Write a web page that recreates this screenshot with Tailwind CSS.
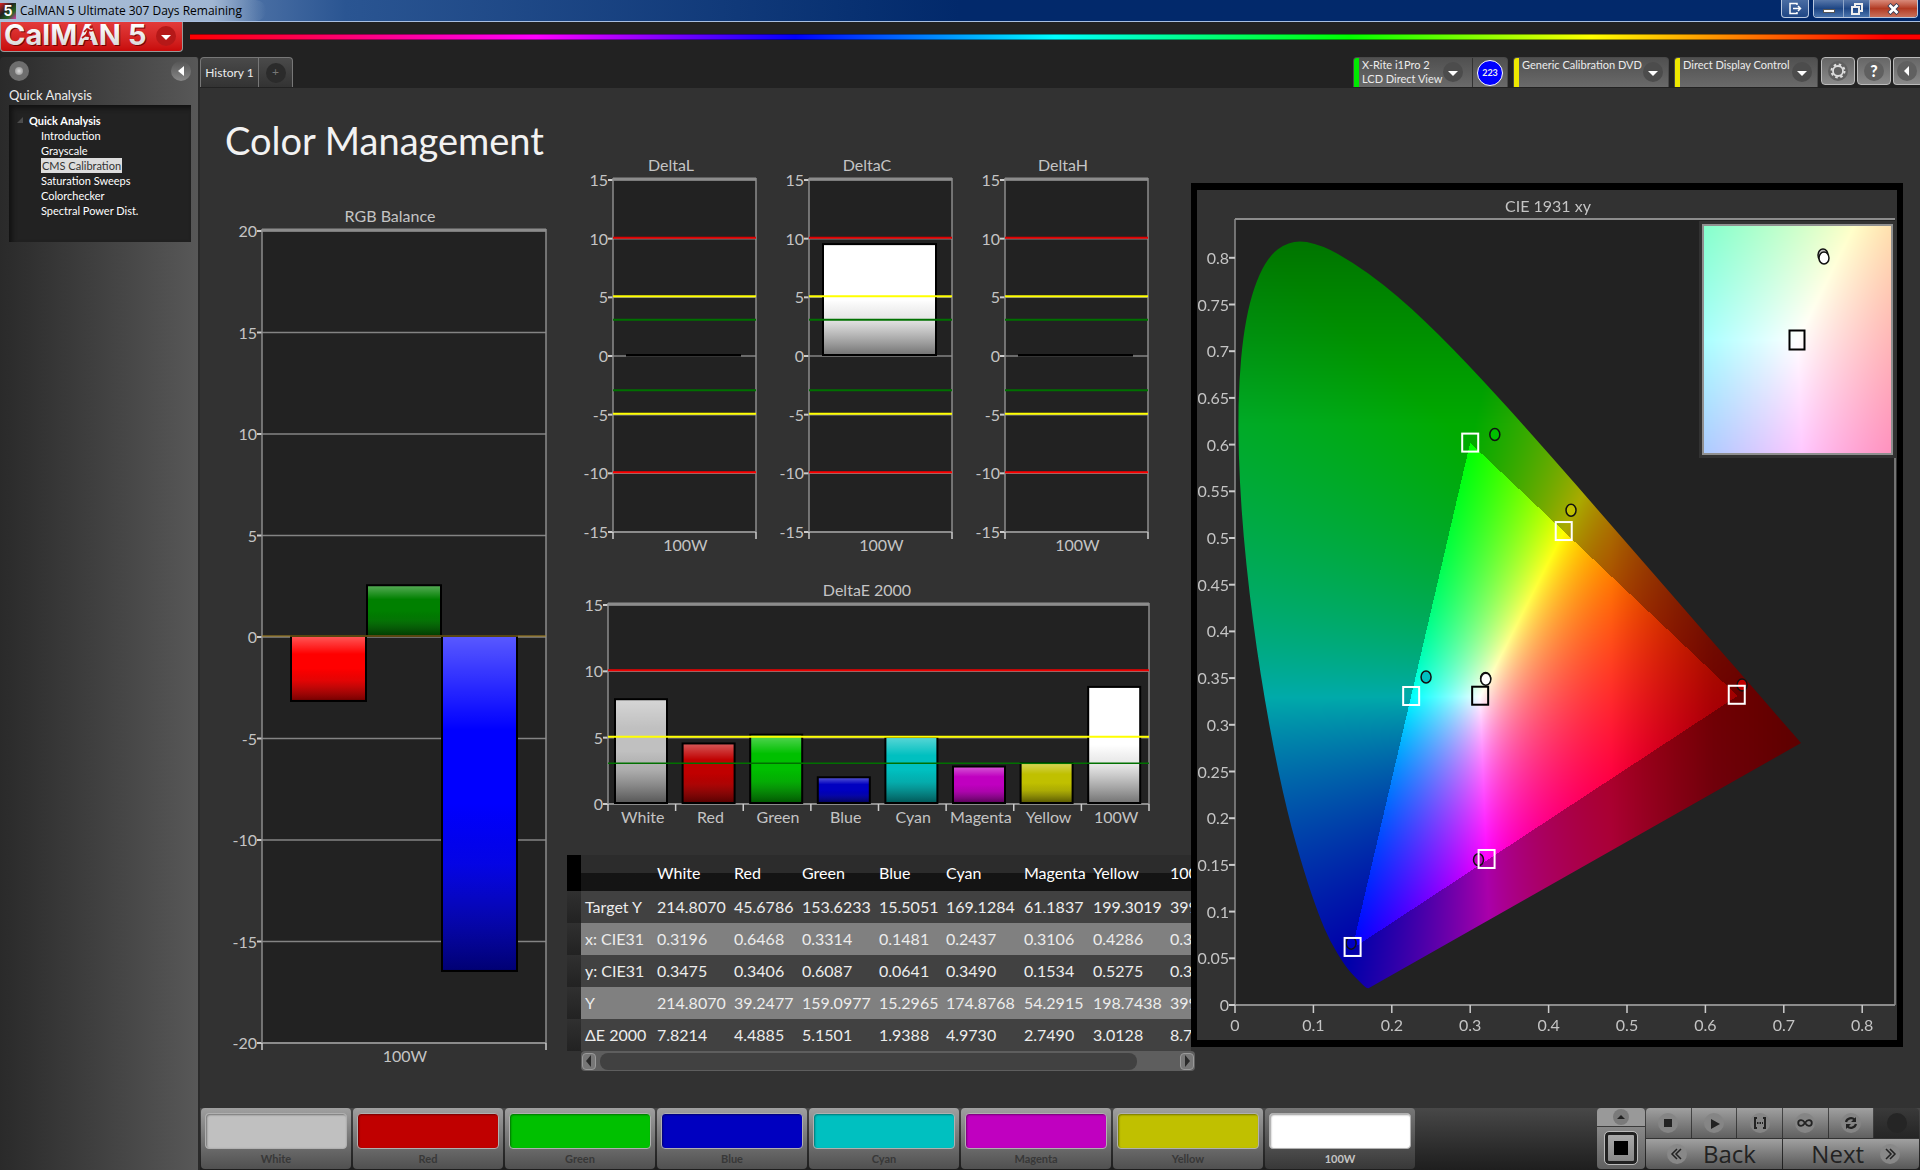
<!DOCTYPE html>
<html lang="en">
<head>
    <meta charset="UTF-8">
    <meta name="viewport" content="width=device-width, initial-scale=1.0">
    <title>CalMAN 5 Ultimate</title>
    <script src="https://cdn.jsdelivr.net/npm/@tailwindcss/browser@4"></script>
</head>
<body class="bg-[#222222] text-[#ececec] font-['Lato','Open_Sans',sans-serif] flex flex-col min-h-screen overflow-x-hidden">

    <!-- Window title bar -->
    <header class="h-[22px] flex items-start justify-between border-b border-[#a9bfe0] bg-linear-to-r from-[#a3b8d4] via-[#2a5592] via-18% to-[#02296b] to-50%">
        <div class="flex items-center h-[21px] pr-6 rounded-r-full bg-linear-to-r from-[#a9bdd6] via-[#a0b6d2] via-80% to-transparent">
            <svg class="w-4 h-4" viewBox="0 0 16 16">
                <defs><linearGradient id="appIcon" x1="0" y1="0" x2="1" y2="1"><stop offset="0" stop-color="#d22"/><stop offset=".4" stop-color="#222"/><stop offset=".7" stop-color="#262"/><stop offset="1" stop-color="#d3a"/></linearGradient></defs>
                <rect width="16" height="16" fill="url(#appIcon)"/>
                <text x="8" y="13" text-anchor="middle" font-family="Inter, sans-serif" font-size="14" font-weight="700" fill="#fff">5</text>
            </svg>
            <h1 class="pl-1 text-[12px] font-['Open_Sans',sans-serif] text-black whitespace-nowrap">CalMAN 5 Ultimate 307 Days Remaining</h1>
        </div>
        <div class="flex pr-[2px] gap-1">
            <button aria-label="Detach" class="w-[28px] h-[18px] rounded-b border border-t-0 border-[#b8c8e0] bg-linear-to-b from-[#4a6da3] to-[#1e4685] flex items-center justify-center">
                <svg class="w-[14px] h-[13px]" viewBox="0 0 14 13" fill="none" stroke="#fff" stroke-width="1.5"><path d="M9 3V1.5H2v10h7V10M5 6.500h7M10 4l2.500 2.500L10 9"/></svg>
            </button>
            <div class="flex h-[18px] rounded-b border border-t-0 border-[#b8c8e0] overflow-hidden">
                <button aria-label="Minimize" class="w-[30px] bg-linear-to-b from-[#5878aa] via-[#1e4685] to-[#4a74ad] flex items-center justify-center border-r border-[#8fa6c8]">
                    <span class="w-3 h-1 bg-white border border-[#555] mt-1"></span>
                </button>
                <button aria-label="Restore" class="w-[26px] bg-linear-to-b from-[#5878aa] via-[#1e4685] to-[#4a74ad] flex items-center justify-center border-r border-[#8fa6c8]">
                    <svg class="w-[12px] h-[12px]" viewBox="0 0 12 12" fill="none" stroke="#eee" stroke-width="2"><path d="M4 3V1h7v7H9"/><rect x="1" y="4" width="7" height="7"/></svg>
                </button>
                <button aria-label="Close" class="w-[47px] bg-linear-to-b from-[#d98a7a] via-[#b23a22] to-[#c9705a] flex items-center justify-center">
                    <svg class="w-[13px] h-[12px]" viewBox="0 0 13 12"><path d="M2 1.500L11 10.500M11 1.500L2 10.500" stroke="#333a55" stroke-width="4.500"/><path d="M2.500 2L10.500 10M10.500 2L2.500 10" stroke="#fff" stroke-width="2.800"/></svg>
                </button>
            </div>
        </div>
    </header>

    <!-- Logo and spectrum line -->
    <div class="flex h-[35px] items-start">
        <button aria-label="CalMAN menu" class="w-[183px] h-[30px] shrink-0 rounded-b border border-t-0 border-[#999] bg-linear-to-b from-[#e33a3a] to-[#c80808]">
            <svg class="w-full h-full" viewBox="0 0 181 29">
                <defs>
                    <linearGradient id="logoText" x1="0" y1="0" x2="0" y2="1"><stop offset=".2" stop-color="#fff"/><stop offset="1" stop-color="#cfcfcf"/></linearGradient>
                </defs>
                <g font-family="Inter, sans-serif" font-weight="700" font-size="29">
                    <g fill="#700"><text x="4" y="24">CalMAN</text><text x="128" y="24">5</text></g>
                    <g fill="url(#logoText)"><text x="3" y="23">CalMAN</text><text x="127" y="23">5</text></g>
                </g>
                <path d="M88 8l-3 5 4 2-1 4M85 13l-4 3M83 10l3-3 4 2 3-1" stroke="#b11" stroke-width="1.600" fill="none"/>
                <circle cx="90" cy="5" r="1.700" fill="#b11"/>
                <circle cx="165" cy="14" r="10" fill="#b51818"/>
                <path d="M160 13h10l-5 5z" fill="#fff"/>
            </svg>
        </button>
        <div class="flex-1 ml-[7px] mt-3 h-[6px] border-y border-black/40 bg-[linear-gradient(to_right,#f00,#f0f_20%,#00f_35%,#0ff_50%,#0f0_67%,#ff0_81%,#f00_98%)]"></div>
    </div>

    <div class="flex flex-1">
        <!-- Workflow sidebar -->
        <aside class="w-[200px] shrink-0 rounded-t bg-linear-to-r from-[#2a2a2a] to-[#585858] border-r-2 border-[#2a2a2a] pl-[9px] pr-[7px]">
            <div class="flex justify-between items-center pt-1">
                <button aria-label="Record" class="w-5 h-5 rounded-full bg-[#6e6e6e] flex items-center justify-center"><span class="w-2 h-2 rounded-full bg-radial from-[#ddd] to-[#888]"></span></button>
                <button aria-label="Collapse" class="w-5 h-5 rounded-full bg-linear-to-b from-[#555] to-[#888] flex items-center justify-center"><svg class="w-2 h-3" viewBox="0 0 8 12"><path d="M7 1v10L1 6z" fill="#fff"/></svg></button>
            </div>
            <h2 class="text-[13px] leading-5 mt-1">Quick Analysis</h2>
            <nav class="bg-[#222] shadow-[inset_3px_3px_5px_#111] h-[137px] pt-[7px] text-[11px] leading-[15px]">
                <div class="flex items-center font-bold text-white h-4">
                    <svg class="w-[6px] h-[6px] ml-2 mr-[6px]" viewBox="0 0 6 6"><path d="M6 0v6H0z" fill="#4c4c4c"/></svg>
                    Quick Analysis
                </div>
                <ul class="pl-8 text-white">
                    <li><a href="#">Introduction</a></li>
                    <li><a href="#">Grayscale</a></li>
                    <li class="flex"><a href="#" class="bg-[#dcdcdc] text-[#333] px-px">CMS Calibration</a></li>
                    <li><a href="#">Saturation Sweeps</a></li>
                    <li><a href="#">Colorchecker</a></li>
                    <li><a href="#">Spectral Power Dist.</a></li>
                </ul>
            </nav>
        </aside>

        <div class="flex-1 flex flex-col min-w-0">
            <!-- Tabs and devices -->
            <div class="flex justify-between items-start h-[31px]">
                <div class="flex h-[30px] rounded-t border border-b-0 border-[#777] bg-linear-to-b from-[#4a4a4a] to-[#333] text-[12px]">
                    <button class="w-[58px] border-r border-[#777] whitespace-nowrap">History 1</button>
                    <button aria-label="Add tab" class="w-[33px] flex items-center justify-center"><span class="w-[20px] h-[20px] rounded-full bg-[#2b2b2b] text-[#777] leading-[18px]">+</span></button>
                </div>
                <div class="flex items-start gap-[5px] text-[11px] leading-[14px]">
                    <div class="flex h-[30px] w-[155px] rounded-t border border-b-0 border-[#4a4a4a] bg-linear-to-b from-[#505050] to-[#6a6a6a] overflow-hidden">
                        <button class="flex flex-1 text-left">
                            <span class="w-[5px] h-full shrink-0 bg-[#00e800]"></span>
                            <span class="flex-1 pl-[3px] whitespace-nowrap">X-Rite i1Pro 2<br>LCD Direct View</span>
                            <svg class="w-[20px] h-[20px] mt-1 mr-[9px] shrink-0" viewBox="0 0 20 20"><circle cx="10" cy="10" r="10" fill="#4c4c4c"/><path d="M5 9h10l-5 5z" fill="#fff"/></svg>
                        </button>
                        <div class="border-l border-[#333] w-[35px] shrink-0 flex items-center justify-center"><span class="w-[26px] h-[26px] rounded-full bg-[#0000ff] border border-white text-[9px] leading-6 font-bold text-center">223</span></div>
                    </div>
                    <button class="flex h-[30px] w-[156px] rounded-t border border-b-0 border-[#4a4a4a] bg-linear-to-b from-[#505050] to-[#6a6a6a] overflow-hidden text-left">
                        <span class="w-[5px] h-full shrink-0 bg-[#eee800]"></span>
                        <span class="flex-1 pl-[3px] whitespace-nowrap">Generic Calibration DVD</span>
                        <svg class="w-[20px] h-[20px] mt-1 mr-[5px] shrink-0" viewBox="0 0 20 20"><circle cx="10" cy="10" r="10" fill="#4c4c4c"/><path d="M5 9h10l-5 5z" fill="#fff"/></svg>
                    </button>
                    <button class="flex h-[30px] w-[144px] rounded-t border border-b-0 border-[#4a4a4a] bg-linear-to-b from-[#505050] to-[#6a6a6a] overflow-hidden text-left">
                        <span class="w-[5px] h-full shrink-0 bg-[#eee800]"></span>
                        <span class="flex-1 pl-[3px] whitespace-nowrap">Direct Display Control</span>
                        <svg class="w-[20px] h-[20px] mt-1 mr-[5px] shrink-0" viewBox="0 0 20 20"><circle cx="10" cy="10" r="10" fill="#4c4c4c"/><path d="M5 9h10l-5 5z" fill="#fff"/></svg>
                    </button>
                    <div class="flex gap-[2px] ml-[-2px]">
                        <button aria-label="Settings" class="w-[34px] h-[28px] rounded border border-[#bbb] bg-linear-to-b from-[#666] to-[#8a8a8a] flex items-center justify-center">
                            <svg class="w-[20px] h-[20px]" viewBox="0 0 20 20"><circle cx="10" cy="10" r="10" fill="#606060"/><circle cx="10" cy="10" r="5" fill="none" stroke="#ddd" stroke-width="1.800"/><circle cx="10" cy="10" r="6.500" fill="none" stroke="#ddd" stroke-width="2" stroke-dasharray="2.500 2.600"/></svg>
                        </button>
                        <button aria-label="Help" class="w-[34px] h-[28px] rounded border border-[#bbb] bg-linear-to-b from-[#666] to-[#8a8a8a] flex items-center justify-center">
                            <span class="w-[20px] h-[20px] rounded-full bg-[#606060] text-white font-black text-[16px] leading-5 text-center">?</span>
                        </button>
                        <button aria-label="Hide" class="w-[27px] h-[28px] rounded-l border border-r-0 border-[#bbb] bg-linear-to-b from-[#666] to-[#8a8a8a] flex items-center justify-center">
                            <svg class="w-[20px] h-[20px]" viewBox="0 0 20 20"><circle cx="10" cy="10" r="10" fill="#606060"/><path d="M12 5v10l-5-5z" fill="#fff"/></svg>
                        </button>
                    </div>
                </div>
            </div>

            <main class="flex-1 bg-[#323232] grid grid-cols-[367fr_624fr_712fr_17fr] items-start">
                <section>
                    <h2 class="h-[112px] pl-[25px] pt-[28px] text-[38px] leading-[48px] text-[#f2f2f2] whitespace-nowrap">Color Management</h2>
                    <svg id="rgbBalance" class="w-full" viewBox="0 0 367 880"></svg>
                </section>

                <section class="pt-[62px] min-w-0">
                    <div class="grid grid-cols-[9fr_196fr_196fr_196fr_27fr]">
                        <svg id="deltaL" class="w-full col-start-2" viewBox="0 0 196 410"></svg>
                        <svg id="deltaC" class="w-full" viewBox="0 0 196 410"></svg>
                        <svg id="deltaH" class="w-full" viewBox="0 0 196 410"></svg>
                    </div>
                    <svg id="deltaE" class="w-full" viewBox="0 0 624 295"></svg>
                    <div class="overflow-hidden">
                        <table class="w-[680px] table-fixed text-[16px] text-left">
                            <colgroup><col class="w-[14px]"><col class="w-[74px]"><col class="w-[77px]"><col class="w-[68px]"><col class="w-[77px]"><col class="w-[67px]"><col class="w-[78px]"><col class="w-[69px]"><col class="w-[77px]"><col></colgroup>
                            <thead id="tableHeader"></thead>
                            <tbody id="tableBody"></tbody>
                        </table>
                    </div>
                    <div class="ml-[14px] mr-[-4px] h-5 bg-[#5e5e5e] rounded-sm flex items-center px-px">
                        <button aria-label="Scroll left" class="w-[14px] h-[17px] rounded border border-[#999] bg-[#777] flex items-center justify-center"><svg class="w-[6px] h-3" viewBox="0 0 6 12"><path d="M5 0v12L0 6z" fill="#2a2a2a"/></svg></button>
                        <div class="ml-1 w-[537px] h-[17px] rounded-lg bg-[#414141]"></div>
                        <button aria-label="Scroll right" class="ml-auto w-[14px] h-[17px] rounded border border-[#999] bg-[#777] flex items-center justify-center"><svg class="w-[6px] h-3" viewBox="0 0 6 12"><path d="M1 0v12l5-6z" fill="#2a2a2a"/></svg></button>
                    </div>
                </section>

                <section class="pt-[95px] z-10">
                    <div class="relative border-x-6 border-y-7 border-black bg-[#323232]">
                        <canvas id="cieFill" width="700" height="850" class="block w-full"></canvas>
                        <svg id="cie" class="absolute inset-0 w-full h-full" viewBox="0 0 700 850"></svg>
                    </div>
                </section>
            </main>

            <!-- Pattern buttons and transport -->
            <footer class="h-[62px] flex justify-between bg-linear-to-b from-[#484848] to-[#1e1e1e]">
                <div id="patterns" class="flex gap-[2px] pl-px"></div>
                <div class="flex gap-px pr-px text-[#222]">
                    <div class="w-[48px] flex flex-col gap-px pb-px">
                        <button aria-label="Expand" class="h-[18px] rounded-t bg-[#999] flex items-center justify-center"><svg class="w-4 h-4" viewBox="0 0 16 16"><circle cx="8" cy="8" r="8" fill="#7a7a7a"/><path d="M4 10h8L8 6z" fill="#222"/></svg></button>
                        <button aria-label="Pattern window" class="flex-1 rounded-b bg-linear-to-b from-[#888] to-[#606060] flex items-center justify-center">
                            <span class="w-8 h-8 rounded border-3 border-[#222] outline outline-[#bbb] bg-linear-to-b from-[#aaa] to-[#888] flex items-center justify-center"><span class="w-[14px] h-[14px] bg-black"></span></span>
                        </button>
                    </div>
                    <div class="w-[273px] flex flex-col gap-px pb-px">
                        <div class="grid grid-cols-6 gap-px h-[30px]">
                            <button aria-label="Stop" class="rounded-tl bg-linear-to-b from-[#a0a0a0] to-[#606060] flex items-center justify-center"><svg class="w-5 h-5" viewBox="0 0 20 20"><circle cx="10" cy="10" r="10" fill="#858585"/><path d="M6 6h8v8H6z" fill="#222"/></svg></button>
                            <button aria-label="Play" class="bg-linear-to-b from-[#a0a0a0] to-[#606060] flex items-center justify-center"><svg class="w-5 h-5" viewBox="0 0 20 20"><circle cx="10" cy="10" r="10" fill="#858585"/><path d="M7 6l9 5-9 5z" fill="#222"/></svg></button>
                            <button aria-label="Read range" class="bg-linear-to-b from-[#a0a0a0] to-[#606060] flex items-center justify-center"><svg class="w-5 h-5" viewBox="0 0 20 20" fill="none" stroke="#222" stroke-width="2"><circle cx="10" cy="10" r="10" fill="#858585" stroke="none"/><path d="M7 5H5v10h2M13 5h2v10h-2"/><path d="M7 10h6" stroke-dasharray="1.500 1"/></svg></button>
                            <button aria-label="Continuous" class="bg-linear-to-b from-[#a0a0a0] to-[#606060] flex items-center justify-center"><svg class="w-5 h-5" viewBox="0 0 20 20" fill="none" stroke="#222" stroke-width="1.800"><circle cx="10" cy="10" r="10" fill="#858585" stroke="none"/><path d="M10 10C8 7 6.500 7.200 6 7.200a2.800 2.800 0 0 0 0 5.600C6.500 12.800 8 13 10 10s3.500-2.800 4-2.800a2.800 2.800 0 0 1 0 5.600C13.500 12.800 12 13 10 10z"/></svg></button>
                            <button aria-label="Refresh" class="bg-linear-to-b from-[#a0a0a0] to-[#606060] flex items-center justify-center"><svg class="w-5 h-5" viewBox="0 0 20 20" fill="none" stroke="#222" stroke-width="2.200"><circle cx="10" cy="10" r="10" fill="#858585" stroke="none"/><path d="M5 9c1-4 6-5 8.500-2.500M15 11c-1 4-6 5-8.500 2.500"/><path d="M15 4v5h-5zM5 16v-5h5z" fill="#222" stroke="none"/></svg></button>
                            <button aria-label="Record" class="rounded-tr bg-linear-to-b from-[#3a3a3a] to-[#252525] flex items-center justify-center"><span class="w-5 h-5 rounded-full bg-[#252525]"></span></button>
                        </div>
                        <div class="grid grid-cols-2 gap-px h-[30px] text-[24px] leading-[30px] font-['Open_Sans',sans-serif] font-medium">
                            <button class="rounded-bl bg-linear-to-b from-[#a0a0a0] to-[#585858] flex items-center pl-[21px] gap-4"><svg class="w-5 h-5" viewBox="0 0 20 20" fill="none" stroke="#222" stroke-width="1.500"><circle cx="10" cy="10" r="10" fill="#888" stroke="none"/><path d="M10 5l-5 5 5 5M14 5l-5 5 5 5"/></svg>Back</button>
                            <button class="rounded-br bg-linear-to-b from-[#a0a0a0] to-[#585858] flex items-center justify-end pr-[19px] gap-4">Next<svg class="w-5 h-5" viewBox="0 0 20 20" fill="none" stroke="#222" stroke-width="1.500"><circle cx="10" cy="10" r="10" fill="#888" stroke="none"/><path d="M6 5l5 5-5 5M10 5l5 5-5 5"/></svg></button>
                        </div>
                    </div>
                </div>
            </footer>
        </div>
    </div>

    <script>
        const colors = [
            { name: 'White', color: '#c0c0c0' },
            { name: 'Red', color: '#c00000' },
            { name: 'Green', color: '#00c000' },
            { name: 'Blue', color: '#0000c0' },
            { name: 'Cyan', color: '#00c0c0' },
            { name: 'Magenta', color: '#c000c0' },
            { name: 'Yellow', color: '#c0c000' },
            { name: '100W', color: '#ffffff' }
        ];

        const rows = [
            ['Target Y', '214.8070', '45.6786', '153.6233', '15.5051', '169.1284', '61.1837', '199.3019', '399.0000'],
            ['x: CIE31', '0.3196', '0.6468', '0.3314', '0.1481', '0.2437', '0.3106', '0.4286', '0.3199'],
            ['y: CIE31', '0.3475', '0.3406', '0.6087', '0.0641', '0.3490', '0.1534', '0.5275', '0.3467'],
            ['Y', '214.8070', '39.2477', '159.0977', '15.2965', '174.8768', '54.2915', '198.7438', '399.0000'],
            ['ΔE 2000', '7.8214', '4.4885', '5.1501', '1.9388', '4.9730', '2.7490', '3.0128', '8.7500']
        ];

        const text = (x, y, s, anchor = 'middle', size = 16, fill = '#c4c4c4') =>
            `<text x="${x}" y="${y}" text-anchor="${anchor}" font-size="${size}" fill="${fill}">${s}</text>`;
        const line = (x1, y1, x2, y2, c = '#848484', w = 1.5) =>
            `<line x1="${x1}" y1="${y1}" x2="${x2}" y2="${y2}" stroke="${c}" stroke-width="${w}"/>`;

        // Bar with the glossy top and dark bottom
        function bar(x, y, w, h, color) {
            return `<rect x="${x}" y="${y}" width="${w}" height="${h}" fill="${color}"/>` +
                `<rect x="${x}" y="${y}" width="${w}" height="${h}" fill="url(#gloss)" stroke="#000" stroke-width="2"/>`;
        }

        // Value chart: grid, threshold lines, bars and labels
        function drawChart(id, o) {
            const [l, t, r, b] = o.plot;
            const py = v => t + (o.max - v) / (o.max - o.min) * (b - t);
            const cell = (r - l) / o.labels.length;
            let s = `<defs><linearGradient id="gloss" x1="0" y1="0" x2="0" y2="1">
                <stop offset="0" stop-color="#fff" stop-opacity=".35"/><stop offset=".28" stop-color="#fff" stop-opacity="0"/>
                <stop offset=".5" stop-color="#000" stop-opacity="0"/><stop offset=".68" stop-color="#222" stop-opacity=".12"/><stop offset="1" stop-color="#000" stop-opacity=".55"/></linearGradient></defs>`;
            s += `<rect x="${l}" y="${t}" width="${r - l}" height="${b - t}" fill="#222"/>`;
            for (let v = o.min; v <= o.max; v += 5) {
                s += line(l - 5, py(v), l, py(v), '#ccc', 2) + line(l, py(v), r, py(v));
                s += text(l - 5, py(v) + 6, v, 'end');
            }
            s += line(l, t - 1, r, t - 1, '#8c8c8c', 3) + line(l, t - 2, l, b, '#8c8c8c') + line(r, t - 2, r, b, '#8c8c8c') + line(l, b, r, b, '#8c8c8c', 2);
            o.bars.forEach(k => {
                const y = Math.min(py(k.v), py(0)) - 1;
                s += bar(k.x, y, k.w, Math.max(Math.abs(py(k.v) - py(0)), 0.5), k.c);
            });
            o.limits.forEach(([v, c, w]) => s += line(l, py(v) - 1, r, py(v) - 1, c, w));
            o.labels.forEach((n, i) => s += text(l + cell * (i + 0.5) + 1, b + 19, n) + line(l + cell * i, b, l + cell * i, b + 7, '#ccc'));
            s += line(r, b, r, b + 7, '#ccc');
            s += text(o.titleX, t - 9, o.title);
            document.getElementById(id).innerHTML = s;
        }

        drawChart('rgbBalance', {
            plot: [62, 31, 346, 843], min: -20, max: 20, title: 'RGB Balance', titleX: 190, labels: ['100W'],
            bars: [{ x: 91, w: 75, v: -3.2, c: '#ff0000' }, { x: 167, w: 74, v: 2.5, c: '#008000' }, { x: 242, w: 75, v: -16.5, c: '#0000ff' }],
            limits: [[0, '#b08a20', 1]]
        });

        const both = [[10, '#e00000', 2], [5, '#ffff00', 2], [3, '#007000', 2], [-3, '#007000', 2], [-5, '#ffff00', 2], [-10, '#ff0000', 2]];
        [['deltaL', 'DeltaL', 0], ['deltaC', 'DeltaC', 9.45], ['deltaH', 'DeltaH', 0]].forEach(([id, title, v]) => drawChart(id, {
            plot: [37, 30, 180, 382], min: -15, max: 15, title, titleX: 95, labels: ['100W'],
            bars: [{ x: 51, w: 113, v, c: '#ffffff' }], limits: both
        }));

        drawChart('deltaE', {
            plot: [41, 45, 582, 244], min: 0, max: 15, title: 'DeltaE 2000', titleX: 300,
            labels: colors.map(c => c.name),
            bars: colors.map((c, i) => ({ x: 48 + i * 67.6, w: 52, v: +rows[4][i + 1], c: c.color })),
            limits: [[10, '#f00000', 2], [5, '#ffff00', 2], [3, '#007000', 1.5]]
        });

        // Results table
        document.getElementById('tableHeader').innerHTML =
            '<tr class="h-[36px] bg-linear-to-b from-[#2c2c2c] from-50% to-[#141414] to-50% text-white"><td class="bg-black"></td><th></th>' +
            colors.map(c => `<th scope="col" class="font-normal pl-[2px]">${c.name}</th>`).join('') + '</tr>';
        document.getElementById('tableBody').innerHTML = rows.map((r, i) =>
            `<tr class="h-[32px] ${i % 2 ? 'bg-[#808080]' : 'bg-[#414141]'}"><td class="bg-linear-to-b from-[#303030] to-[#222]"></td><th scope="row" class="font-normal pl-1 whitespace-nowrap">${r[0]}</th>` +
            r.slice(1).map(v => `<td class="pl-[2px]">${v}</td>`).join('') + '</tr>').join('');

        document.getElementById('patterns').innerHTML = colors.map((c, i) =>
            `<button class="w-[150px] h-[61px] rounded bg-linear-to-b ${i === 7 ? 'from-[#777] to-[#383838] text-[#c4c4c4]' : 'from-[#a0a0a0] to-[#505050] text-[#383838]'} flex flex-col items-center pt-[5px] text-[11px] leading-5 font-bold">` +
            `<span class="w-[142px] h-[37px] rounded border border-[#b0b0b0] shadow-[inset_1px_1px_2px_#0006]" style="background-color:${c.color}"></span>${c.name}</button>`).join('');

        // CIE 1931 diagram
        const P = { l: 38, t: 29, r: 698, b: 815 };
        const cx = x => P.l + x * 784;
        const cy = y => P.b - y * 934;
        const locus = [[.1741, .005], [.1726, .0048], [.1689, .0069], [.1644, .0109], [.1566, .0177], [.144, .0297], [.1241, .0578], [.1096, .0868], [.0913, .1327], [.0687, .2007], [.0454, .295], [.0235, .4127], [.0082, .5384], [.0039, .6548], [.0139, .7502], [.0389, .812], [.0743, .8338], [.1142, .8262], [.1547, .8059], [.1929, .7816], [.2296, .7543], [.2658, .7243], [.3016, .6923], [.3373, .6589], [.3731, .6245], [.4441, .5547], [.5125, .4866], [.5752, .4242], [.627, .3725], [.6658, .334], [.6915, .3083], [.714, .2859], [.7347, .2653]]
            .map(([x, y]) => [cx(x * 0.984 - 0.001), cy(y * 0.97 + 0.01 + x * 0.018)]);

        // Linear RGB of a chromaticity, scaled so that the largest channel is full
        function cieColor(x, y) {
            const z = 1 - x - y;
            const raw = [3.2406 * x - 1.5372 * y - 0.4986 * z, -0.9689 * x + 1.8758 * y + 0.0415 * z, 0.0557 * x - 0.204 * y + 1.057 * z];
            const m = Math.max(...raw);
            let k = 255 / m;
            if (Math.min(...raw) < -0.001) k *= 0.667;
            if (x > 0.48) k *= x < 0.61 ? 1 - (x - 0.48) * 2.6 : 0.66 - (x - 0.61);
            if (y > 0.62) k *= 1 - (y - 0.62) * 1.6;
            return raw.map(c => Math.max(0, c) * k);
        }

        function paint(w, h, toXY) {
            const c = document.createElement('canvas');
            c.width = w;
            c.height = h;
            const g = c.getContext('2d');
            const img = g.createImageData(w, h);
            for (let j = 0; j < h; j++) {
                for (let i = 0; i < w; i++) {
                    const rgb = cieColor(...toXY(i + 0.5, j + 0.5));
                    img.data.set([rgb[0], rgb[1], rgb[2], 255], (j * w + i) * 4);
                }
            }
            g.putImageData(img, 0, 0);
            return c;
        }

        const ctx = document.getElementById('cieFill').getContext('2d');
        ctx.fillStyle = '#222';
        ctx.fillRect(P.l, P.t, P.r - P.l, P.b - P.t);
        ctx.save();
        ctx.beginPath();
        // Smooth through the midpoints, straight along the purple line
        ctx.moveTo(...locus[0]);
        for (let i = 1; i < locus.length - 1; i++) {
            const [a, b] = [locus[i], locus[i + 1]];
            ctx.quadraticCurveTo(a[0], a[1], (a[0] + b[0]) / 2, (a[1] + b[1]) / 2);
        }
        ctx.lineTo(...locus[locus.length - 1]);
        ctx.closePath();
        ctx.clip();
        ctx.drawImage(paint(700, 850, (i, j) => [(i - P.l) / 784, (P.b - 1 - j) / 934]), 0, 0);
        ctx.restore();

        // Inset around the white point
        ctx.fillStyle = '#323232';
        ctx.fillRect(502, 31, 198, 237);
        ctx.drawImage(paint(189, 229, (i, j) => [0.3127 + (i / 189 - 0.5) * 0.051, 0.329 - (j / 229 - 0.5) * 0.051]), 506, 35);

        const square = (x, y, c, w = 16, h = 18) => `<rect x="${x - w / 2}" y="${y - h / 2}" width="${w}" height="${h}" fill="none" stroke="${c}" stroke-width="2"/>`;
        const dot = (x, y, c) => `<ellipse cx="${x}" cy="${y}" rx="5" ry="6" fill="${c}" stroke="#111" stroke-width="1.5"/>`;
        let s = text(351, 22, 'CIE 1931 xy');
        s += line(P.l, P.t, P.r, P.t, '#8c8c8c', 2) + line(P.l, P.t, P.l, P.b, '#8c8c8c') + line(P.r, 268, P.r, P.b, '#8c8c8c') + line(P.l, P.b, P.r, P.b, '#8c8c8c', 2);
        for (let i = 0; i <= 16; i++) {
            const v = i / 20;
            s += line(P.l - 6, cy(v), P.l, cy(v), '#ccc', 2) + text(P.l - 6, cy(v) + 6, v, 'end');
            if (i % 2 === 0) s += line(cx(v), P.b, cx(v), P.b + 8, '#ccc') + text(cx(v), P.b + 26, v);
        }
        s += '<rect x="506" y="35" width="189" height="229" fill="none" stroke="#909090" stroke-width="2"/>';
        s += '<g transform="translate(0 -2)">';
        colors.forEach((c, i) => s += dot(cx(+rows[1][i + 1]), cy(+rows[2][i + 1]), c.color));
        [[.3, .6], [.4193, .5053], [.2247, .3287], [.64, .33], [.3209, .1542], [.15, .06]].forEach(p => s += square(cx(p[0]), cy(p[1]), '#fff'));
        s += square(cx(.3127), cy(.329), '#000') + '</g>';
        s += dot(626, 65, '#c0c0c0') + dot(627, 68, '#fff') + square(600, 150, '#000', 15, 19);
        document.getElementById('cie').innerHTML = s;
    </script>
</body>
</html>
